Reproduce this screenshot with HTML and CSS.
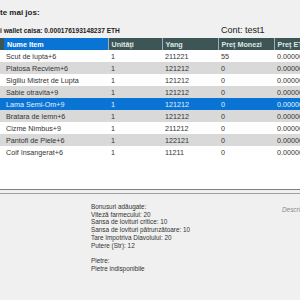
FILE: index.html
```html
<!DOCTYPE html>
<html lang="ro">
<head>
  <meta charset="UTF-8" />
  <title>Inventar</title>
  <link rel="stylesheet" href="styles.css">
</head>
<body>
  <div class="top-bar">
    <div class="top-info">
      <div class="page-title">te mai jos:</div>
      <div class="wallet">i wallet caisa: 0.000176193148237 ETH</div>
    </div>
    <div class="account">Cont: test1</div>
  </div>

  <div class="list-panel">
    <table class="item-table">
      <colgroup>
        <col class="col-lead">
        <col class="col-name">
        <col class="col-qty">
        <col class="col-yang">
        <col class="col-coins">
        <col class="col-eth">
      </colgroup>
      <thead>
        <tr>
          <th class="lead"></th>
          <th class="active">Nume Item</th>
          <th>Unități</th>
          <th>Yang</th>
          <th>Preț Monezi</th>
          <th>Preț ETH</th>
        </tr>
      </thead>
      <tbody>
        <tr><td></td><td>Scut de lupta+6</td><td>1</td><td>211221</td><td>55</td><td>0.0000000</td></tr>
        <tr class="alt"><td></td><td>Platosa Recviem+6</td><td>1</td><td>121212</td><td>0</td><td>0.0000000</td></tr>
        <tr><td></td><td>Sigiliu Mistreț de Lupta</td><td>1</td><td>121212</td><td>0</td><td>0.0000000</td></tr>
        <tr class="alt"><td></td><td>Sabie otravita+9</td><td>1</td><td>121212</td><td>0</td><td>0.0000000</td></tr>
        <tr class="selected"><td></td><td>Lama Semi-Om+9</td><td>1</td><td>121212</td><td>0</td><td>0.0000000</td></tr>
        <tr class="alt"><td></td><td>Bratara de lemn+6</td><td>1</td><td>121212</td><td>0</td><td>0.0000000</td></tr>
        <tr><td></td><td>Cizme Nimbus+9</td><td>1</td><td>211212</td><td>0</td><td>0.0000000</td></tr>
        <tr class="alt"><td></td><td>Pantofi de Piele+6</td><td>1</td><td>122121</td><td>0</td><td>0.0000000</td></tr>
        <tr><td></td><td>Coif însangerat+6</td><td>1</td><td>11211</td><td>0</td><td>0.0000000</td></tr>
      </tbody>
    </table>
  </div>

  <div class="splitter"></div>

  <div class="details">
    <div class="bonuses">
      <div>Bonusuri adăugate:</div>
      <div>Viteză farmecului: 20</div>
      <div>Șansa de lovituri critice: 10</div>
      <div>Șansa de lovituri pătrunzătoare: 10</div>
      <div>Tare împotriva Diavolului: 20</div>
      <div>Putere (Str): 12</div>
      <div class="gap"></div>
      <div>Pietre:</div>
      <div>Pietre indisponibile</div>
    </div>
    <div class="description">Descriere</div>
  </div>
</body>
</html>
```

FILE: styles.css
```css
body {
  margin: 0;
  width: 300px;
  height: 300px;
  overflow: hidden;
  font-family: 'Liberation Sans', Arial, sans-serif;
  background-color: #f0f0f0;
  color: #333;
}
.top-bar {
  display: flex;
  align-items: flex-end;
  height: 38px;
  box-sizing: border-box;
  padding-bottom: 4px;
}
.top-info {
  width: 221px;
  flex-shrink: 0;
}
.page-title {
  font-size: 8px;
  font-weight: 700;
  color: #222;
  margin-bottom: 10px;
  white-space: nowrap;
}
.wallet {
  font-size: 6.6px;
  font-weight: 700;
  color: #222;
  white-space: nowrap;
}
.account {
  font-size: 9px;
  color: #222;
  white-space: nowrap;
  margin-bottom: -1px;
}
.list-panel {
  height: 151px;
  background: white;
  overflow: hidden;
}
.item-table {
  table-layout: fixed;
  border-collapse: collapse;
  width: 354px;
  font-size: 7.2px;
  white-space: nowrap;
}
.col-lead { width: 4px; }
.col-name { width: 104px; }
.col-qty { width: 54px; }
.col-yang { width: 56px; }
.col-coins { width: 56px; }
.col-eth { width: 80px; }
.item-table th {
  height: 12px;
  padding: 0 3px;
  text-align: left;
  font-weight: 700;
  color: #dfe8e8;
  background-color: #3d5555;
  border-left: 1px solid #9fb0b0;
  overflow: hidden;
}
.item-table th.lead {
  border-left: none;
  padding: 0;
}
.item-table th.active {
  background-color: #0a74d4;
  color: white;
  border-left: none;
}
.item-table td {
  height: 12px;
  padding: 0 2px;
  overflow: hidden;
}
.item-table td:nth-child(n+3) {
  padding-left: 3px;
}
.item-table tr.alt td {
  background-color: #d9d9d9;
}
.item-table tr.selected td {
  background-color: #0a74d4;
  color: #e6f0fb;
}
.splitter {
  height: 3px;
  border-top: 1px solid #808080;
  border-bottom: 1px solid #a0a0a0;
  background: #f0f0f0;
  margin-bottom: 9px;
}
.details {
  display: flex;
  font-size: 6.4px;
  color: #333;
}
.bonuses {
  margin-left: 91px;
  width: 191px;
  flex-shrink: 0;
  line-height: 7.7px;
}
.gap {
  height: 7.7px;
}
.description {
  margin-top: 3px;
  font-style: italic;
  color: #888;
  white-space: nowrap;
}
```
